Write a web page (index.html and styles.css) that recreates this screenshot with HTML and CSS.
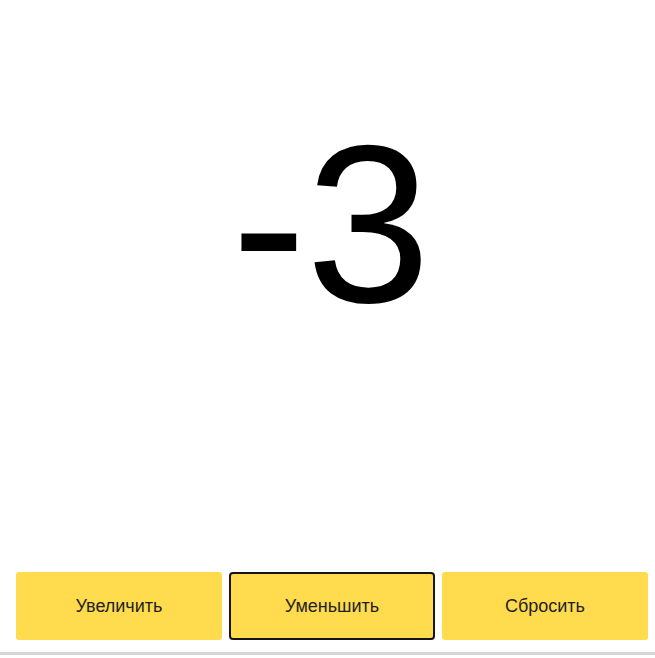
FILE: index.html
```html
<!DOCTYPE html>
<html lang="ru">
<head>
<meta charset="utf-8">
<title>Счётчик</title>
<link rel="stylesheet" href="styles.css">
</head>
<body>
<div class="app">
  <div class="counter">-3</div>
  <div class="controls">
    <button class="btn">Увеличить</button>
    <button class="btn btn-active">Уменьшить</button>
    <button class="btn">Сбросить</button>
  </div>
  <div class="bottom-line"></div>
</div>
</body>
</html>
```
FILE: styles.css
```css
html, body {
  margin: 0;
  padding: 0;
  background: #ffffff;
}
.app {
  height: 658px;
  display: flex;
  flex-direction: column;
  font-family: "Liberation Sans", Arial, sans-serif;
}
.counter {
  padding-top: 96px;
  padding-left: 7px;
  font-size: 224px;
  line-height: 1.15;
  text-align: center;
  color: #000;
  flex: 1;
}
.controls {
  display: grid;
  grid-template-columns: repeat(3, 1fr);
  gap: 7px;
  padding: 0 7px 0 16px;
  margin-bottom: 12px;
}
.btn {
  height: 68px;
  background: #ffdb4d;
  border: none;
  border-radius: 3px;
  font-family: "Liberation Sans", Arial, sans-serif;
  font-size: 18px;
  color: #1f1f1f;
  padding: 0;
}
.btn-active {
  border: 2px solid #151515;
  border-radius: 4px;
}
.bottom-line {
  height: 3px;
  background: #d6d6da;
  margin-bottom: 3px;
}
```
